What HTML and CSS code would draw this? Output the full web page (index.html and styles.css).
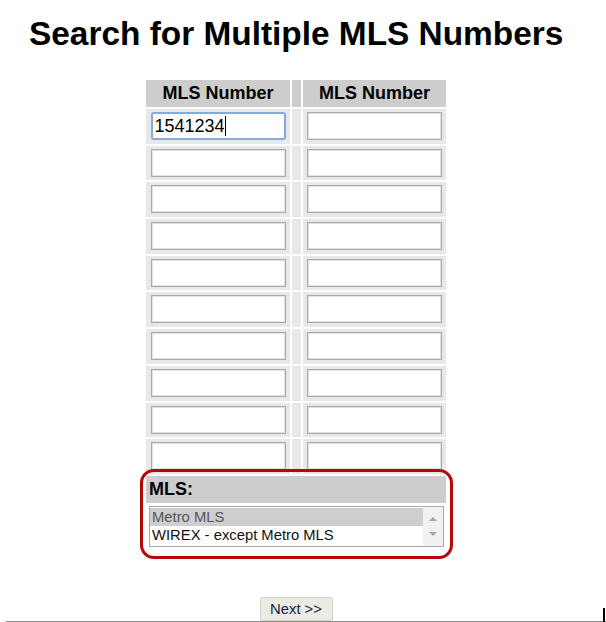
FILE: index.html
```html
<!DOCTYPE html>
<html lang="en">
<head>
<meta charset="utf-8">
<title>Search for Multiple MLS Numbers</title>
<link rel="stylesheet" href="styles.css">
</head>
<body>
<h1 class="title">Search for Multiple MLS Numbers</h1>
<form class="search">
  <div class="grid">
    <div class="hd">MLS Number</div><div class="hd"></div><div class="hd">MLS Number</div>

    <div class="cell"><span class="field"><input class="num focused" type="text" value="1541234"><span class="caret"></span></span></div><div class="cell"></div><div class="cell"><input class="num" type="text"></div>
    <div class="cell"><input class="num" type="text"></div><div class="cell"></div><div class="cell"><input class="num" type="text"></div>
    <div class="cell"><input class="num" type="text"></div><div class="cell"></div><div class="cell"><input class="num" type="text"></div>
    <div class="cell"><input class="num" type="text"></div><div class="cell"></div><div class="cell"><input class="num" type="text"></div>
    <div class="cell"><input class="num" type="text"></div><div class="cell"></div><div class="cell"><input class="num" type="text"></div>
    <div class="cell"><input class="num" type="text"></div><div class="cell"></div><div class="cell"><input class="num" type="text"></div>
    <div class="cell"><input class="num" type="text"></div><div class="cell"></div><div class="cell"><input class="num" type="text"></div>
    <div class="cell"><input class="num" type="text"></div><div class="cell"></div><div class="cell"><input class="num" type="text"></div>
    <div class="cell"><input class="num" type="text"></div><div class="cell"></div><div class="cell"><input class="num" type="text"></div>
    <div class="cell"><input class="num" type="text"></div><div class="cell"></div><div class="cell"><input class="num" type="text"></div>

    <div class="mls">
      <div class="mls-hd">MLS:</div>
      <div class="mls-body">
        <div class="listbox" role="listbox">
          <div class="options">
            <div class="opt selected" role="option">Metro MLS</div>
            <div class="opt" role="option">WIREX - except Metro MLS</div>
          </div>
          <div class="scroll">
            <span class="arrow up"></span>
            <span class="arrow down"></span>
          </div>
        </div>
      </div>
      <div class="highlight"></div>
    </div>
  </div>
  <div class="actions"><button type="button" class="next">Next &gt;&gt;</button></div>
</form>
<div class="rule"></div>
</body>
</html>
```
FILE: styles.css
```css
html, body {
  margin: 0;
  padding: 0;
  background: #fff;
}
body {
  font-family: "Liberation Sans", Arial, sans-serif;
  color: #000;
  height: 622px;
  overflow: hidden;
}
.title {
  margin: 0;
  padding: 15px 0 0 29px;
  font-size: 33.4px;
  font-weight: bold;
  line-height: 38px;
  height: 80px;
  box-sizing: border-box;
}
.search {
  margin: 0;
}
.grid {
  margin-left: 146px;
  width: 300px;
  display: grid;
  grid-template-columns: 144px 9px 143px;
  grid-template-rows: 27px repeat(10, 34.7px) auto;
  column-gap: 2px;
  row-gap: 2px;
}
.hd {
  background: #cdcdcd;
  font-weight: bold;
  font-size: 18px;
  line-height: 27px;
  text-align: center;
}
.cell {
  background: #e8e8e8;
  display: flex;
  justify-content: center;
  align-items: flex-start;
}
.field {
  position: relative;
  display: block;
  margin-top: 3px;
}
.num {
  display: block;
  width: 135px;
  height: 28px;
  margin: 3px 0 0 0;
  box-sizing: border-box;
  border: 1px solid #a9a9a9;
  box-shadow: inset 0 0 0 1px #e2e2e2;
  background: #fff;
  font-family: "Liberation Sans", Arial, sans-serif;
  font-size: 18px;
  padding: 0 3px;
  color: #000;
  outline: none;
}
.field .num {
  margin: 0;
}
.num.focused {
  border: 2px solid #86a9de;
  border-radius: 3px;
  box-shadow: none;
  padding: 0 2px;
}
.caret {
  position: absolute;
  left: 74px;
  top: 4px;
  width: 1px;
  height: 20px;
  background: #000;
}
.mls {
  grid-column: 1 / -1;
  position: relative;
  display: flex;
  flex-direction: column;
}
.mls-hd {
  background: #cdcdcd;
  font-weight: bold;
  font-size: 18px;
  line-height: 27px;
  padding-left: 3px;
}
.mls-body {
  padding: 3px 2px 3px 3px;
}
.listbox {
  width: 295px;
  height: 41px;
  box-sizing: border-box;
  border: 1px solid #a9a9a9;
  display: flex;
  background: #fff;
}
.options {
  flex: 1;
  padding-top: 1px;
}
.opt {
  font-size: 14.8px;
  line-height: 18px;
  padding-left: 2px;
  color: #111;
  white-space: nowrap;
}
.opt.selected {
  background: #cecece;
  color: #555;
}
.scroll {
  width: 20px;
  background: #f1f1f1;
  display: flex;
  flex-direction: column;
  align-items: center;
  justify-content: space-around;
  padding: 4px 0;
}
.arrow {
  width: 0;
  height: 0;
  border-left: 4px solid transparent;
  border-right: 4px solid transparent;
}
.arrow.up {
  border-bottom: 4px solid #a3a3a3;
}
.arrow.down {
  border-top: 4px solid #a3a3a3;
}
.highlight {
  position: absolute;
  left: -6px;
  right: -7px;
  top: -7px;
  bottom: -9px;
  border: 3px solid #b8050c;
  border-radius: 14px;
  pointer-events: none;
}
.actions {
  width: 300px;
  margin-left: 146px;
  margin-top: 47px;
  display: flex;
  justify-content: center;
}
.next {
  width: 73px;
  height: 24px;
  font-family: "Liberation Sans", Arial, sans-serif;
  font-size: 14.8px;
  color: #1a1a40;
  background: #ebeae3;
  border: 1px solid #d6d5cc;
  border-radius: 2px;
  padding: 0;
  margin: 0;
  display: block;
}
.rule {
  position: relative;
  margin-left: 6px;
  height: 2px;
  background: #8e8e8e;
}
.rule::after {
  content: "";
  position: absolute;
  right: 1px;
  bottom: 0;
  width: 2px;
  height: 15px;
  background: #000;
}
```
